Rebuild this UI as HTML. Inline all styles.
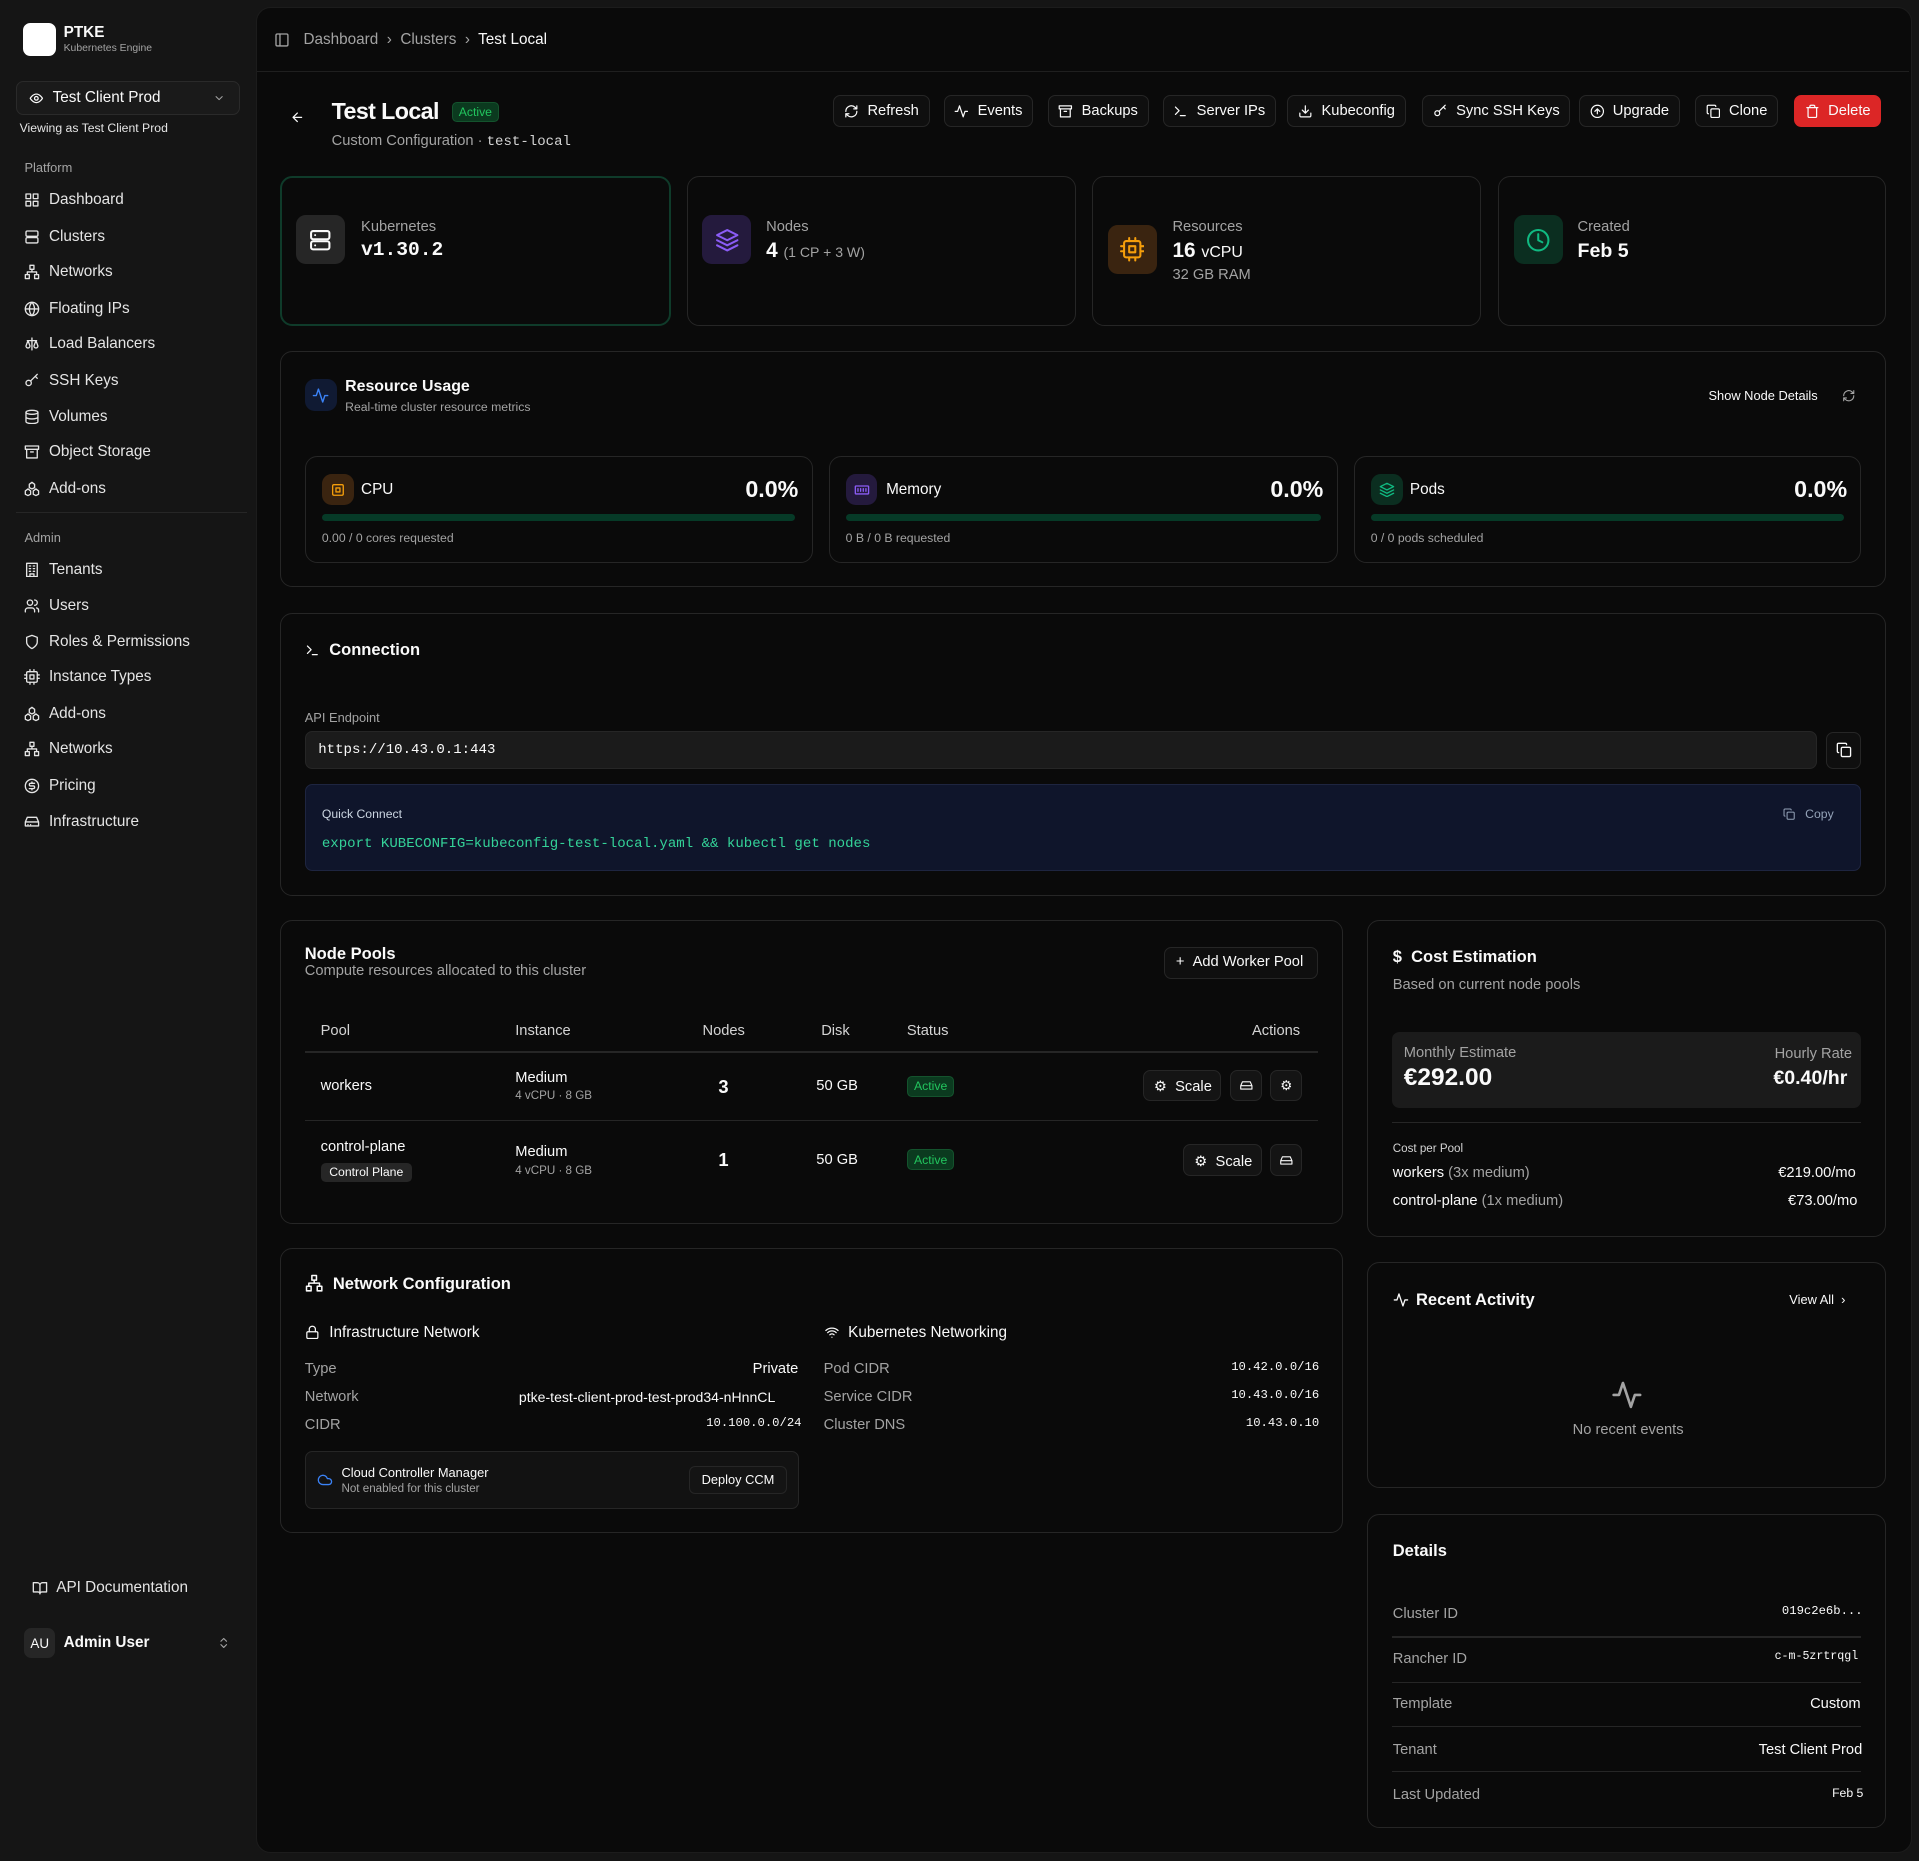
<!DOCTYPE html>
<html><head><meta charset="utf-8"><style>
*{box-sizing:border-box;margin:0;padding:0}
html,body{width:1919px;height:1861px;overflow:hidden;background:#151515}
#z{zoom:1.22385;width:1568px;height:1521px;position:relative;font-family:"Liberation Sans",sans-serif;color:#fafafa;font-size:13px}
.a{position:absolute;white-space:nowrap}
.side{left:0;top:0;width:209px;height:1521px;background:#151515}
.main{left:209px;top:6px;width:1353px;height:1508px;background:#0a0a0a;border-radius:12px;border:1px solid #1c1c1c}
.nav{position:absolute;left:20px;font-size:12.5px;color:#e5e5e5;display:flex;align-items:center;gap:7px;white-space:nowrap}
.nav svg{width:13px;height:13px}
.sec{position:absolute;left:20px;font-size:10.5px;color:#a3a3a3}
.card{position:absolute;border:1px solid #262626;border-radius:10px;background:#0a0a0a}
.btn{position:absolute;top:78px;height:26px;border:1px solid #262626;border-radius:6px;background:#0f0f0f;font-size:12px;display:flex;align-items:center;gap:7px;padding:0 8px;color:#fafafa;white-space:nowrap}
.btn svg{width:12px;height:12px}
.ic{position:absolute;border-radius:8px;display:flex;align-items:center;justify-content:center}
.mut{color:#a3a3a3}
.mono{font-family:"Liberation Mono",monospace}
.bar{position:absolute;height:6px;border-radius:3px;background:#063a27}
.badge{position:absolute;background:#0b3a1f;color:#22c55e;font-size:10px;border-radius:4px;padding:2px 5px;border:1px solid #14532d}
.row{position:absolute;font-size:12px;white-space:nowrap}
.hl{position:absolute;height:1px;background:#262626}
svg{fill:none;stroke:currentColor;stroke-width:2;stroke-linecap:round;stroke-linejoin:round}
</style></head><body><div id="z">
<div class="a side"></div>
<div class="a" style="left:19px;top:19px;width:27px;height:27px;background:#fff;border-radius:6px"></div>
<div class="a" style="left:52px;top:20px;font-size:12.5px;font-weight:bold">PTKE</div>
<div class="a mut" style="left:52px;top:35px;font-size:8.5px">Kubernetes Engine</div>
<div class="a" style="left:13px;top:66px;width:183px;height:28px;border:1px solid #2a2a2a;border-radius:6px;background:#1a1a1a"></div>
<svg class="a" style="left:24px;top:74px;width:12px;height:12px" viewBox="0 0 24 24"><path d="M2 12s4-7 10-7 10 7 10 7-4 7-10 7S2 12 2 12z"/><circle cx="12" cy="12" r="3"/></svg>
<div class="a" style="left:43px;top:73px;font-size:12.5px">Test Client Prod</div>
<svg class="a mut" style="left:174px;top:75px;width:10px;height:10px" viewBox="0 0 24 24"><path d="M6 9l6 6 6-6"/></svg>
<div class="a" style="left:16px;top:99px;font-size:10px;color:#e5e5e5">Viewing as Test Client Prod</div>
<div class="sec" style="top:131px">Platform</div>
<div class="nav" style="top:156px"><svg viewBox="0 0 24 24"><rect x="3" y="3" width="7" height="7"/><rect x="14" y="3" width="7" height="7"/><rect x="3" y="14" width="7" height="7"/><rect x="14" y="14" width="7" height="7"/></svg>Dashboard</div>
<div class="nav" style="top:186px"><svg viewBox="0 0 24 24"><rect x="3" y="3" width="18" height="8" rx="2"/><rect x="3" y="13" width="18" height="8" rx="2"/></svg>Clusters</div>
<div class="nav" style="top:215px"><svg viewBox="0 0 24 24"><rect x="9" y="2" width="6" height="6"/><rect x="2" y="16" width="6" height="6"/><rect x="16" y="16" width="6" height="6"/><path d="M5 16v-4h14v4M12 8v4"/></svg>Networks</div>
<div class="nav" style="top:245px"><svg viewBox="0 0 24 24"><circle cx="12" cy="12" r="10"/><path d="M2 12h20M12 2a15 15 0 010 20M12 2a15 15 0 000 20"/></svg>Floating IPs</div>
<div class="nav" style="top:274px"><svg viewBox="0 0 24 24"><path d="M12 3v18M5 7h14M3 15l3-8 3 8a3 3 0 01-6 0zM15 15l3-8 3 8a3 3 0 01-6 0z"/></svg>Load Balancers</div>
<div class="nav" style="top:304px"><svg viewBox="0 0 24 24"><circle cx="7" cy="15" r="4"/><path d="M10 12l10-10M17 5l3 3"/></svg>SSH Keys</div>
<div class="nav" style="top:333px"><svg viewBox="0 0 24 24"><ellipse cx="12" cy="5" rx="9" ry="3"/><path d="M3 5v14c0 1.7 4 3 9 3s9-1.3 9-3V5M3 12c0 1.7 4 3 9 3s9-1.3 9-3"/></svg>Volumes</div>
<div class="nav" style="top:362px"><svg viewBox="0 0 24 24"><rect x="2" y="3" width="20" height="5"/><path d="M4 8v13h16V8M10 12h4"/></svg>Object Storage</div>
<div class="nav" style="top:392px"><svg viewBox="0 0 24 24"><path d="M12 2l4 3v5l-4 2-4-2V5zM6 12l4 3v5l-4 2-4-2v-5zM18 12l4 3v5l-4 2-4-2v-5z"/></svg>Add-ons</div>
<div class="hl" style="left:13px;top:418px;width:189px"></div>
<div class="sec" style="top:433px">Admin</div>
<div class="nav" style="top:458px"><svg viewBox="0 0 24 24"><rect x="4" y="2" width="16" height="20"/><path d="M9 22v-4h6v4M8 6h2M14 6h2M8 10h2M14 10h2M8 14h2M14 14h2"/></svg>Tenants</div>
<div class="nav" style="top:488px"><svg viewBox="0 0 24 24"><circle cx="9" cy="7" r="4"/><path d="M2 21v-2a4 4 0 014-4h6a4 4 0 014 4v2M16 3a4 4 0 010 8M22 21v-2a4 4 0 00-3-4"/></svg>Users</div>
<div class="nav" style="top:517px"><svg viewBox="0 0 24 24"><path d="M12 22s8-4 8-10V5l-8-3-8 3v7c0 6 8 10 8 10z"/></svg>Roles &amp; Permissions</div>
<div class="nav" style="top:546px"><svg viewBox="0 0 24 24"><rect x="4" y="4" width="16" height="16" rx="2"/><rect x="9" y="9" width="6" height="6"/><path d="M9 1v3M15 1v3M9 20v3M15 20v3M20 9h3M20 14h3M1 9h3M1 14h3"/></svg>Instance Types</div>
<div class="nav" style="top:576px"><svg viewBox="0 0 24 24"><path d="M12 2l4 3v5l-4 2-4-2V5zM6 12l4 3v5l-4 2-4-2v-5zM18 12l4 3v5l-4 2-4-2v-5z"/></svg>Add-ons</div>
<div class="nav" style="top:605px"><svg viewBox="0 0 24 24"><rect x="9" y="2" width="6" height="6"/><rect x="2" y="16" width="6" height="6"/><rect x="16" y="16" width="6" height="6"/><path d="M5 16v-4h14v4M12 8v4"/></svg>Networks</div>
<div class="nav" style="top:635px"><svg viewBox="0 0 24 24"><circle cx="12" cy="12" r="10"/><path d="M16 8h-6a2 2 0 000 4h4a2 2 0 010 4H8M12 6v2M12 16v2"/></svg>Pricing</div>
<div class="nav" style="top:664px"><svg viewBox="0 0 24 24"><path d="M22 12H2M5 5l-3 7v6h20v-6l-3-7zM6 16h.01M10 16h.01"/></svg>Infrastructure</div>
<div class="nav" style="top:1290px;left:26px"><svg viewBox="0 0 24 24"><path d="M2 4h6a4 4 0 014 4v13a3 3 0 00-3-3H2zM22 4h-6a4 4 0 00-4 4v13a3 3 0 013-3h7z"/></svg>API Documentation</div>
<div class="a" style="left:20px;top:1330px;width:25px;height:25px;border-radius:6px;background:#262626;font-size:11px;display:flex;align-items:center;justify-content:center">AU</div>
<div class="a" style="left:52px;top:1335px;font-size:12.5px;font-weight:bold">Admin User</div>
<svg class="a mut" style="left:177px;top:1336px;width:11px;height:13px" viewBox="0 0 24 24"><path d="M7 9l5-5 5 5M7 15l5 5 5-5"/></svg>

<div class="a main"></div>
<svg class="a mut" style="left:224px;top:26px;width:13px;height:13px" viewBox="0 0 24 24"><rect x="3" y="3" width="18" height="18" rx="2"/><path d="M9 3v18"/></svg>
<div class="a mut" style="left:248px;top:25px;font-size:12.5px">Dashboard &nbsp;›&nbsp; Clusters &nbsp;›&nbsp; <span style="color:#fafafa">Test Local</span></div>
<div class="hl" style="left:210px;top:58px;width:1350px;background:#1f1f1f"></div>
<svg class="a" style="left:237px;top:90px;width:12px;height:12px" viewBox="0 0 24 24"><path d="M19 12H5M12 19l-7-7 7-7"/></svg>
<div class="a" style="left:271px;top:80px;font-size:19px;font-weight:bold;letter-spacing:-.5px">Test Local</div>
<div class="badge" style="left:369px;top:83px">Active</div>
<div class="a mut" style="left:271px;top:109px;font-size:12px">Custom Configuration · <span class="mono" style="color:#d4d4d4;font-size:11.5px">test-local</span></div>

<div class="btn" style="left:681px"><svg viewBox="0 0 24 24"><path d="M3 12a9 9 0 0115-6.7L21 8M21 3v5h-5M21 12a9 9 0 01-15 6.7L3 16M3 21v-5h5"/></svg>Refresh</div>
<div class="btn" style="left:771px"><svg viewBox="0 0 24 24"><path d="M22 12h-4l-3 9L9 3l-3 9H2"/></svg>Events</div>
<div class="btn" style="left:856px"><svg viewBox="0 0 24 24"><rect x="2" y="3" width="20" height="5"/><path d="M4 8v13h16V8M10 12h4"/></svg>Backups</div>
<div class="btn" style="left:950px"><svg viewBox="0 0 24 24"><path d="M4 17l6-6-6-6M12 19h8"/></svg>Server IPs</div>
<div class="btn" style="left:1052px"><svg viewBox="0 0 24 24"><path d="M21 15v4a2 2 0 01-2 2H5a2 2 0 01-2-2v-4M7 10l5 5 5-5M12 15V3"/></svg>Kubeconfig</div>
<div class="btn" style="left:1162px"><svg viewBox="0 0 24 24"><circle cx="7" cy="15" r="4"/><path d="M10 12l10-10M17 5l3 3"/></svg>Sync SSH Keys</div>
<div class="btn" style="left:1290px"><svg viewBox="0 0 24 24"><circle cx="12" cy="12" r="10"/><path d="M16 12l-4-4-4 4M12 16V8"/></svg>Upgrade</div>
<div class="btn" style="left:1385px"><svg viewBox="0 0 24 24"><rect x="8" y="8" width="14" height="14" rx="2"/><path d="M4 16a2 2 0 01-2-2V4a2 2 0 012-2h10a2 2 0 012 2"/></svg>Clone</div>
<div class="btn" style="left:1466px;background:#dc2626;border-color:#dc2626"><svg viewBox="0 0 24 24"><path d="M3 6h18M19 6v14a2 2 0 01-2 2H7a2 2 0 01-2-2V6M8 6V4a2 2 0 012-2h4a2 2 0 012 2v2"/></svg>Delete</div>

<div class="card" style="left:229px;top:144px;width:319px;height:122px;border:2px solid #0f3b2a"></div>
<div class="ic" style="left:242px;top:176px;width:40px;height:40px;background:#262626"><svg style="width:20px;height:20px" viewBox="0 0 24 24"><rect x="3" y="3" width="18" height="8" rx="2"/><rect x="3" y="13" width="18" height="8" rx="2"/><path d="M7 7h.01M7 17h.01"/></svg></div>
<div class="a mut" style="left:295px;top:179px;font-size:12px">Kubernetes</div>
<div class="a mono" style="left:295px;top:195px;font-size:16px;font-weight:bold">v1.30.2</div>
<div class="card" style="left:561px;top:144px;width:318px;height:122px"></div>
<div class="ic" style="left:574px;top:176px;width:40px;height:40px;background:#241a3d;color:#8b5cf6"><svg style="width:20px;height:20px" viewBox="0 0 24 24"><path d="M12 2l10 5-10 5L2 7zM2 12l10 5 10-5M2 17l10 5 10-5"/></svg></div>
<div class="a mut" style="left:626px;top:179px;font-size:12px">Nodes</div>
<div class="a" style="left:626px;top:195px;font-size:17px;font-weight:bold">4 <span class="mut" style="font-size:11.5px;font-weight:normal">(1 CP + 3 W)</span></div>
<div class="card" style="left:892px;top:144px;width:318px;height:122px"></div>
<div class="ic" style="left:905px;top:184px;width:40px;height:40px;background:#3a2410;color:#f59e0b"><svg style="width:20px;height:20px" viewBox="0 0 24 24"><rect x="4" y="4" width="16" height="16" rx="2"/><rect x="9" y="9" width="6" height="6"/><path d="M9 1v3M15 1v3M9 20v3M15 20v3M20 9h3M20 14h3M1 9h3M1 14h3"/></svg></div>
<div class="a mut" style="left:958px;top:179px;font-size:12px">Resources</div>
<div class="a" style="left:958px;top:195px;font-size:17px;font-weight:bold">16 <span style="font-size:13px;font-weight:normal">vCPU</span></div>
<div class="a mut" style="left:958px;top:218px;font-size:12px">32 GB RAM</div>
<div class="card" style="left:1224px;top:144px;width:317px;height:122px"></div>
<div class="ic" style="left:1237px;top:176px;width:40px;height:40px;background:#0b2e20;color:#10b981"><svg style="width:20px;height:20px" viewBox="0 0 24 24"><circle cx="12" cy="12" r="10"/><path d="M12 6v6l4 2"/></svg></div>
<div class="a mut" style="left:1289px;top:179px;font-size:12px">Created</div>
<div class="a" style="left:1289px;top:196px;font-size:16px;font-weight:bold">Feb 5</div>

<div class="card" style="left:229px;top:287px;width:1312px;height:193px"></div>
<div class="ic" style="left:249px;top:310px;width:26px;height:26px;background:#101a33;color:#3b82f6"><svg style="width:14px;height:14px" viewBox="0 0 24 24"><path d="M22 12h-4l-3 9L9 3l-3 9H2"/></svg></div>
<div class="a" style="left:282px;top:309px;font-size:13px;font-weight:bold">Resource Usage</div>
<div class="a mut" style="left:282px;top:327px;font-size:10px">Real-time cluster resource metrics</div>
<div class="a" style="left:1396px;top:317px;font-size:10.5px">Show Node Details</div>
<svg class="a mut" style="left:1505px;top:318px;width:11px;height:11px" viewBox="0 0 24 24"><path d="M3 12a9 9 0 0115-6.7L21 8M21 3v5h-5M21 12a9 9 0 01-15 6.7L3 16M3 21v-5h5"/></svg>
<div class="card" style="left:249px;top:373px;width:415px;height:87px"></div>
<div class="ic" style="left:263px;top:387px;width:26px;height:26px;background:#3a2410;color:#f59e0b"><svg style="width:13px;height:13px" viewBox="0 0 24 24"><rect x="4" y="4" width="16" height="16" rx="2"/><rect x="9" y="9" width="6" height="6"/></svg></div>
<div class="a" style="left:295px;top:393px;font-size:12.5px">CPU</div>
<div class="a" style="left:609px;top:389px;font-size:19px;font-weight:bold">0.0%</div>
<div class="bar" style="left:263px;top:420px;width:387px"></div>
<div class="a mut" style="left:263px;top:434px;font-size:10px">0.00 / 0 cores requested</div>
<div class="card" style="left:677px;top:373px;width:416px;height:87px"></div>
<div class="ic" style="left:691px;top:387px;width:26px;height:26px;background:#241a3d;color:#8b5cf6"><svg style="width:13px;height:13px" viewBox="0 0 24 24"><rect x="2" y="6" width="20" height="12" rx="1"/><path d="M6 10v4M10 10v4M14 10v4M18 10v4"/></svg></div>
<div class="a" style="left:724px;top:393px;font-size:12.5px">Memory</div>
<div class="a" style="left:1038px;top:389px;font-size:19px;font-weight:bold">0.0%</div>
<div class="bar" style="left:691px;top:420px;width:388px"></div>
<div class="a mut" style="left:691px;top:434px;font-size:10px">0 B / 0 B requested</div>
<div class="card" style="left:1106px;top:373px;width:415px;height:87px"></div>
<div class="ic" style="left:1120px;top:387px;width:26px;height:26px;background:#0b2e20;color:#10b981"><svg style="width:13px;height:13px" viewBox="0 0 24 24"><path d="M12 2l10 5-10 5L2 7zM2 12l10 5 10-5M2 17l10 5 10-5"/></svg></div>
<div class="a" style="left:1152px;top:393px;font-size:12.5px">Pods</div>
<div class="a" style="left:1466px;top:389px;font-size:19px;font-weight:bold">0.0%</div>
<div class="bar" style="left:1120px;top:420px;width:387px"></div>
<div class="a mut" style="left:1120px;top:434px;font-size:10px">0 / 0 pods scheduled</div>

<div class="card" style="left:229px;top:501px;width:1312px;height:231px"></div>
<svg class="a" style="left:249px;top:525px;width:12px;height:12px" viewBox="0 0 24 24"><path d="M4 17l6-6-6-6M12 19h8"/></svg>
<div class="a" style="left:269px;top:523px;font-size:13.5px;font-weight:bold">Connection</div>
<div class="a mut" style="left:249px;top:580px;font-size:10.5px">API Endpoint</div>
<div class="a" style="left:249px;top:597px;width:1236px;height:31px;background:#1b1b1b;border:1px solid #262626;border-radius:6px"></div>
<div class="a mono" style="left:260px;top:606px;font-size:11.5px">https://10.43.0.1:443</div>
<div class="a" style="left:1492px;top:598px;width:29px;height:30px;border:1px solid #262626;border-radius:6px;background:#0f0f0f"></div>
<svg class="a" style="left:1500px;top:606px;width:13px;height:13px" viewBox="0 0 24 24"><rect x="8" y="8" width="14" height="14" rx="2"/><path d="M4 16a2 2 0 01-2-2V4a2 2 0 012-2h10a2 2 0 012 2"/></svg>
<div class="a" style="left:249px;top:641px;width:1272px;height:71px;background:#0f152b;border:1px solid #1e2540;border-radius:6px"></div>
<div class="a" style="left:263px;top:659px;font-size:10px;color:#cbd5e1">Quick Connect</div>
<svg class="a" style="left:1457px;top:660px;width:10px;height:10px;color:#94a3b8" viewBox="0 0 24 24"><rect x="8" y="8" width="14" height="14" rx="2"/><path d="M4 16a2 2 0 01-2-2V4a2 2 0 012-2h10a2 2 0 012 2"/></svg>
<div class="a" style="left:1475px;top:659px;font-size:10px;color:#94a3b8">Copy</div>
<div class="a mono" style="left:263px;top:683px;font-size:11.5px;color:#34d399">export KUBECONFIG=kubeconfig-test-local.yaml &amp;&amp; kubectl get nodes</div>

<div class="card" style="left:229px;top:752px;width:868px;height:248px"></div>
<div class="a" style="left:249px;top:771px;font-size:13.5px;font-weight:bold">Node Pools</div>
<div class="a mut" style="left:249px;top:787px;font-size:12px">Compute resources allocated to this cluster</div>
<div class="a" style="left:951px;top:774px;width:126px;height:26px;border:1px solid #262626;border-radius:6px;background:#0f0f0f;font-size:12px;padding:5px 9px">+ &nbsp;Add Worker Pool</div>
<div class="row" style="left:262px;top:836px;color:#d4d4d4">Pool</div>
<div class="row" style="left:421px;top:836px;color:#d4d4d4">Instance</div>
<div class="row" style="left:574px;top:836px;color:#d4d4d4">Nodes</div>
<div class="row" style="left:671px;top:836px;color:#d4d4d4">Disk</div>
<div class="row" style="left:741px;top:836px;color:#d4d4d4">Status</div>
<div class="row" style="left:1023px;top:836px;color:#d4d4d4">Actions</div>
<div class="hl" style="left:249px;top:859px;width:828px"></div>
<div class="row" style="left:262px;top:881px">workers</div>
<div class="row" style="left:421px;top:874px">Medium</div>
<div class="row mut" style="left:421px;top:890px;font-size:9.5px">4 vCPU · 8 GB</div>
<div class="row" style="left:587px;top:879px;font-size:15px;font-weight:bold">3</div>
<div class="row" style="left:667px;top:881px">50 GB</div>
<div class="badge" style="left:741px;top:879px">Active</div>
<div class="a" style="left:934px;top:874px;width:64px;height:26px;border:1px solid #262626;border-radius:6px;background:#141414;font-size:12px;padding:6px 8px">⚙ &nbsp;Scale</div>
<div class="a" style="left:1005px;top:874px;width:26px;height:26px;border:1px solid #262626;border-radius:6px;background:#141414"></div>
<svg class="a" style="left:1012px;top:882px;width:12px;height:11px" viewBox="0 0 24 24"><path d="M22 12H2M5 5l-3 7v6h20v-6l-3-7z"/></svg>
<div class="a" style="left:1038px;top:874px;width:26px;height:26px;border:1px solid #262626;border-radius:6px;background:#141414;font-size:11px;text-align:center;line-height:24px">⚙</div>
<div class="hl" style="left:249px;top:915px;width:828px"></div>
<div class="row" style="left:262px;top:931px">control-plane</div>
<div class="a" style="left:262px;top:950px;background:#262626;border-radius:4px;font-size:10px;padding:2px 7px">Control Plane</div>
<div class="row" style="left:421px;top:935px">Medium</div>
<div class="row mut" style="left:421px;top:951px;font-size:9.5px">4 vCPU · 8 GB</div>
<div class="row" style="left:587px;top:939px;font-size:15px;font-weight:bold">1</div>
<div class="row" style="left:667px;top:941px">50 GB</div>
<div class="badge" style="left:741px;top:939px">Active</div>
<div class="a" style="left:967px;top:935px;width:64px;height:26px;border:1px solid #262626;border-radius:6px;background:#141414;font-size:12px;padding:6px 8px">⚙ &nbsp;Scale</div>
<div class="a" style="left:1038px;top:935px;width:26px;height:26px;border:1px solid #262626;border-radius:6px;background:#141414"></div>
<svg class="a" style="left:1045px;top:943px;width:12px;height:11px" viewBox="0 0 24 24"><path d="M22 12H2M5 5l-3 7v6h20v-6l-3-7z"/></svg>

<div class="card" style="left:1117px;top:752px;width:424px;height:259px"></div>
<div class="a" style="left:1138px;top:774px;font-size:13.5px;font-weight:bold">$ &nbsp;Cost Estimation</div>
<div class="a mut" style="left:1138px;top:798px;font-size:12px">Based on current node pools</div>
<div class="a" style="left:1137px;top:843px;width:384px;height:62px;background:#1b1b1b;border-radius:6px"></div>
<div class="a mut" style="left:1147px;top:854px;font-size:12px">Monthly Estimate</div>
<div class="a" style="left:1147px;top:869px;font-size:20px;font-weight:bold">€292.00</div>
<div class="a mut" style="left:1450px;top:855px;font-size:12px">Hourly Rate</div>
<div class="a" style="left:1449px;top:872px;font-size:16px;font-weight:bold">€0.40/hr</div>
<div class="hl" style="left:1137px;top:917px;width:384px"></div>
<div class="a mut" style="left:1138px;top:933px;font-size:9.5px;color:#d4d4d4">Cost per Pool</div>
<div class="a" style="left:1138px;top:952px;font-size:12px">workers <span class="mut">(3x medium)</span></div>
<div class="a" style="left:1453px;top:952px;font-size:12px">€219.00/mo</div>
<div class="a" style="left:1138px;top:975px;font-size:12px">control-plane <span class="mut">(1x medium)</span></div>
<div class="a" style="left:1461px;top:975px;font-size:12px">€73.00/mo</div>

<div class="card" style="left:229px;top:1020px;width:868px;height:233px"></div>
<svg class="a" style="left:249px;top:1041px;width:15px;height:15px" viewBox="0 0 24 24"><rect x="9" y="2" width="6" height="6"/><rect x="2" y="16" width="6" height="6"/><rect x="16" y="16" width="6" height="6"/><path d="M5 16v-4h14v4M12 8v4"/></svg>
<div class="a" style="left:272px;top:1041px;font-size:13.5px;font-weight:bold">Network Configuration</div>
<svg class="a" style="left:249px;top:1083px;width:12px;height:12px" viewBox="0 0 24 24"><rect x="3" y="11" width="18" height="11" rx="2"/><path d="M7 11V7a5 5 0 0110 0v4"/></svg>
<div class="a" style="left:269px;top:1082px;font-size:12.5px">Infrastructure Network</div>
<div class="a mut" style="left:249px;top:1112px;font-size:12px">Type</div><div class="a" style="left:615px;top:1112px;font-size:12px">Private</div>
<div class="a mut" style="left:249px;top:1135px;font-size:12px">Network</div><div class="a" style="left:424px;top:1135px;font-size:11.5px">ptke-test-client-prod-test-prod34-nHnnCL</div>
<div class="a mut" style="left:249px;top:1158px;font-size:12px">CIDR</div><div class="a mono" style="left:577px;top:1157px;font-size:10px">10.100.0.0/24</div>
<div class="a" style="left:249px;top:1186px;width:404px;height:47px;background:#121212;border:1px solid #262626;border-radius:6px"></div>
<svg class="a" style="left:259px;top:1203px;width:13px;height:13px;color:#3b82f6" viewBox="0 0 24 24"><path d="M17.5 19H9a7 7 0 116.7-9h1.8a4.5 4.5 0 110 9z"/></svg>
<div class="a" style="left:279px;top:1197px;font-size:10.5px">Cloud Controller Manager</div>
<div class="a mut" style="left:279px;top:1211px;font-size:9.5px">Not enabled for this cluster</div>
<div class="a" style="left:563px;top:1198px;width:80px;height:23px;border:1px solid #262626;border-radius:5px;background:#141414;font-size:10.5px;text-align:center;line-height:21px">Deploy CCM</div>
<svg class="a" style="left:673px;top:1083px;width:13px;height:12px" viewBox="0 0 24 24"><path d="M5 12.5a10 10 0 0114 0M8.5 16a5 5 0 017 0M2 9a15 15 0 0120 0M12 20h.01"/></svg>
<div class="a" style="left:693px;top:1082px;font-size:12.5px">Kubernetes Networking</div>
<div class="a mut" style="left:673px;top:1112px;font-size:12px">Pod CIDR</div><div class="a mono" style="left:1006px;top:1111px;font-size:10px">10.42.0.0/16</div>
<div class="a mut" style="left:673px;top:1135px;font-size:12px">Service CIDR</div><div class="a mono" style="left:1006px;top:1134px;font-size:10px">10.43.0.0/16</div>
<div class="a mut" style="left:673px;top:1158px;font-size:12px">Cluster DNS</div><div class="a mono" style="left:1018px;top:1157px;font-size:10px">10.43.0.10</div>

<div class="card" style="left:1117px;top:1031px;width:424px;height:185px"></div>
<svg class="a" style="left:1138px;top:1056px;width:13px;height:13px" viewBox="0 0 24 24"><path d="M22 12h-4l-3 9L9 3l-3 9H2"/></svg>
<div class="a" style="left:1157px;top:1054px;font-size:13.5px;font-weight:bold">Recent Activity</div>
<div class="a" style="left:1462px;top:1056px;font-size:10.5px">View All &nbsp;›</div>
<svg class="a mut" style="left:1316px;top:1127px;width:26px;height:26px" viewBox="0 0 24 24"><path d="M22 12h-4l-3 9L9 3l-3 9H2"/></svg>
<div class="a mut" style="left:1285px;top:1162px;font-size:12px">No recent events</div>

<div class="card" style="left:1117px;top:1237px;width:424px;height:257px"></div>
<div class="a" style="left:1138px;top:1259px;font-size:13.5px;font-weight:bold">Details</div>
<div class="a mut" style="left:1138px;top:1312px;font-size:12px">Cluster ID</div><div class="a mono" style="left:1456px;top:1311px;font-size:10px">019c2e6b...</div>
<div class="hl" style="left:1137px;top:1337px;width:384px"></div>
<div class="a mut" style="left:1138px;top:1349px;font-size:12px">Rancher ID</div><div class="a mono" style="left:1450px;top:1348px;font-size:9.5px">c-m-5zrtrqgl</div>
<div class="hl" style="left:1137px;top:1374px;width:384px"></div>
<div class="a mut" style="left:1138px;top:1386px;font-size:12px">Template</div><div class="a" style="left:1479px;top:1386px;font-size:12px">Custom</div>
<div class="hl" style="left:1137px;top:1410px;width:384px"></div>
<div class="a mut" style="left:1138px;top:1423px;font-size:12px">Tenant</div><div class="a" style="left:1437px;top:1423px;font-size:12px">Test Client Prod</div>
<div class="hl" style="left:1137px;top:1447px;width:384px"></div>
<div class="a mut" style="left:1138px;top:1460px;font-size:12px">Last Updated</div><div class="a" style="left:1497px;top:1459px;font-size:10px">Feb 5</div>
</div></body></html>
